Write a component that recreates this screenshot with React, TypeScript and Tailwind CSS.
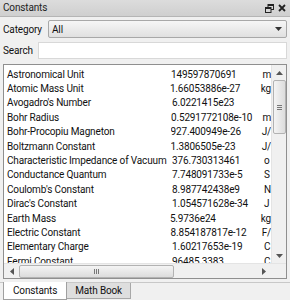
import React from "react";

const rows: [string, string, string][] = [
  ["Astronomical Unit", "149597870691", "m"],
  ["Atomic Mass Unit", "1.66053886e-27", "kg"],
  ["Avogadro's Number", "6.0221415e23", ""],
  ["Bohr Radius", "0.5291772108e-10", "m"],
  ["Bohr-Procopiu Magneton", "927.400949e-26", "J/"],
  ["Boltzmann Constant", "1.3806505e-23", "J/"],
  ["Characteristic Impedance of Vacuum", "376.730313461", "o"],
  ["Conductance Quantum", "7.748091733e-5", "S"],
  ["Coulomb's Constant", "8.987742438e9", "N"],
  ["Dirac's Constant", "1.054571628e-34", "J"],
  ["Earth Mass", "5.9736e24", "kg"],
  ["Electric Constant", "8.854187817e-12", "F/"],
  ["Elementary Charge", "1.60217653e-19", "C"],
  ["Fermi Constant", "96485.3383", "C"],
];

export default function App() {
  return (
    <div
      className="w-[290px] h-[300px] bg-[#f0f0f0] flex flex-col overflow-hidden text-[10px] tracking-[-0.15px] text-[#111]"
      style={{ fontFamily: 'Roboto, "Open Sans", sans-serif' }}
    >
      {/* title bar */}
      <div className="h-[17px] flex items-center justify-between px-[3px] bg-gradient-to-b from-[#dcdcdc] to-[#cfcfcf] border-b border-[#b5b5b5]">
        <span className="leading-none text-[#222]">Constants</span>
        <div className="flex items-center gap-[4px] pr-[1px]">
          <svg width="9" height="9" viewBox="0 0 9 9">
            <rect x="3" y="0.5" width="5.5" height="5" fill="none" stroke="#222" strokeWidth="1" />
            <rect x="3" y="0.5" width="5.5" height="1.5" fill="#222" />
            <rect x="0.5" y="3.5" width="5.5" height="5" fill="#d6d6d6" stroke="#222" strokeWidth="1" />
            <rect x="0.5" y="3.5" width="5.5" height="1.5" fill="#222" />
          </svg>
          <svg width="8" height="8" viewBox="0 0 8 8">
            <path d="M1 1 L7 7 M7 1 L1 7" stroke="#222" strokeWidth="1.8" />
          </svg>
        </div>
      </div>

      {/* category */}
      <div className="flex items-center mt-[3px] px-[3px] h-[18px]">
        <span className="w-[45px]">Category</span>
        <div className="flex-1 h-[18px] border border-[#a8a8a8] rounded-[2px] bg-gradient-to-b from-[#f6f6f6] to-[#e0e0e0] flex items-center justify-between pl-[3px] pr-[4px]">
          <span>All</span>
          <svg width="7" height="4" viewBox="0 0 7 4">
            <path d="M0 0 L7 0 L3.5 4 Z" fill="#333" />
          </svg>
        </div>
      </div>

      {/* search */}
      <div className="flex items-center mt-[4px] px-[3px] h-[17px]">
        <span className="w-[35px]">Search</span>
        <div className="flex-1 h-[17px] border border-[#d8d8d8] bg-white" />
      </div>

      {/* list */}
      <div className="mt-[5px] mx-[3px] h-[215px] border border-[#8f8f8f] bg-white flex flex-col">
        <div className="flex flex-1 min-h-0">
          <div className="flex-1 overflow-hidden pt-[2px]">
            {rows.map((r) => (
              <div key={r[0]} className="flex h-[14.4px] items-center whitespace-nowrap">
                <span className="w-[168px] pl-[3px] overflow-hidden">{r[0]}</span>
                <span className="w-[92px] overflow-hidden">{r[1]}</span>
                <span>{r[2]}</span>
              </div>
            ))}
          </div>
          {/* vertical scrollbar */}
          <div className="w-[15px] bg-[#f0f0f0] border-l border-[#e4e4e4] flex flex-col items-center">
            <div className="h-[15px] flex items-center justify-center">
              <svg width="7" height="4" viewBox="0 0 7 4"><path d="M0 4 L7 4 L3.5 0 Z" fill="#555" /></svg>
            </div>
            <div className="w-[13px] h-[54px] border border-[#b2b2b2] rounded-[2px] bg-gradient-to-r from-[#f4f4f4] to-[#dcdcdc] flex flex-col items-center justify-center gap-[1px]">
              <div className="w-[5px] h-px bg-[#777]" />
              <div className="w-[5px] h-px bg-[#777]" />
              <div className="w-[5px] h-px bg-[#777]" />
            </div>
            <div className="flex-1" />
            <div className="h-[15px] flex items-center justify-center">
              <svg width="7" height="4" viewBox="0 0 7 4"><path d="M0 0 L7 0 L3.5 4 Z" fill="#555" /></svg>
            </div>
          </div>
        </div>
        {/* horizontal scrollbar */}
        <div className="h-[15px] flex bg-[#f0f0f0] border-t border-[#e4e4e4]">
          <div className="flex-1 flex items-center">
            <div className="w-[15px] flex items-center justify-center">
              <svg width="4" height="7" viewBox="0 0 4 7"><path d="M4 0 L4 7 L0 3.5 Z" fill="#555" /></svg>
            </div>
            <div className="w-[155px] h-[13px] border border-[#b2b2b2] rounded-[2px] bg-gradient-to-b from-[#f4f4f4] to-[#dcdcdc] flex items-center justify-center gap-[1px]">
              <div className="w-px h-[5px] bg-[#777]" />
              <div className="w-px h-[5px] bg-[#777]" />
              <div className="w-px h-[5px] bg-[#777]" />
            </div>
            <div className="flex-1" />
            <div className="w-[15px] flex items-center justify-center">
              <svg width="4" height="7" viewBox="0 0 4 7"><path d="M0 0 L0 7 L4 3.5 Z" fill="#555" /></svg>
            </div>
          </div>
          <div className="w-[15px] bg-[#f0f0f0]" />
        </div>
      </div>

      {/* tabs */}
      <div className="mt-auto flex items-start px-[3px] h-[18px] border-t border-[#c8c8c8]">
        <div className="-mt-px h-[18px] px-[9px] bg-white border-x border-b border-[#a0a0a0] flex items-center">
          Constants
        </div>
        <div className="h-[16px] px-[8px] bg-[#dedede] border-r border-b border-[#a8a8a8] flex items-center">
          Math Book
        </div>
      </div>
    </div>
  );
}
